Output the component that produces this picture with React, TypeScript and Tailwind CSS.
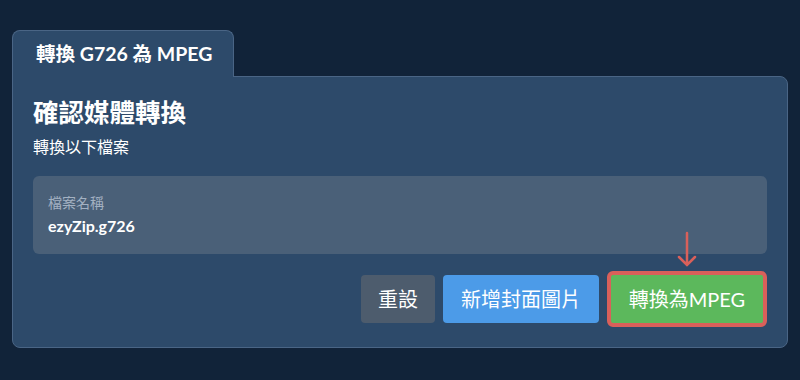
const font = { fontFamily: "Lato, 'Noto Sans CJK TC', sans-serif" };

const App = () => {
  return (
    <div
      className="h-[380px] w-[800px] bg-[#112339] px-3 pt-[30px] text-white"
      style={font}
    >
      <div className="relative z-10 -mb-px flex h-[47px] w-[222px] items-center rounded-t-lg border border-b-0 border-[#4a6585] bg-[#2d4a6a] pl-[23px]">
        <h1 className="whitespace-nowrap text-[19.5px] font-bold leading-none">轉換 G726 為 MPEG</h1>
      </div>
      <div className="flex flex-col rounded-lg rounded-tl-none border border-[#4a6585] bg-[#2d4a6a] px-5 pt-[18px] pb-5">
        <h2 className="text-[25.5px] font-bold leading-[34px]">確認媒體轉換</h2>
        <p className="mt-[8px] text-[16px] leading-5">轉換以下檔案</p>
        <div className="mt-[19px] flex h-[78px] flex-col justify-center gap-[5px] rounded-md bg-[#4a6078] px-[15px]">
          <span className="text-[14px] leading-4 text-[#a3b1c2]">檔案名稱</span>
          <span className="text-[16px] font-bold leading-5">ezyZip.g726</span>
        </div>
        <div className="mt-[17px] flex items-center justify-end gap-2">
          <button className="h-12 rounded bg-[#4d5c6d] px-[17px] text-[20px]">重設</button>
          <button className="h-12 rounded bg-[#4c9be8] px-[18px] text-[20px]">新增封面圖片</button>
          <div className="relative">
            <svg
              className="absolute -top-[40px] left-1/2 -translate-x-1/2"
              width="20"
              height="36"
              viewBox="0 0 20 36"
              fill="none"
              stroke="#d9605a"
              strokeWidth="2.5"
              strokeLinecap="round"
            >
              <path d="M10 2v32M2 26l8 8 8-8" />
            </svg>
            <button className="h-14 w-40 rounded-md border-4 border-[#d9605a] bg-[#5cb85c] text-[20px]">
              轉換為MPEG
            </button>
          </div>
        </div>
      </div>
    </div>
  );
};

export default App;
